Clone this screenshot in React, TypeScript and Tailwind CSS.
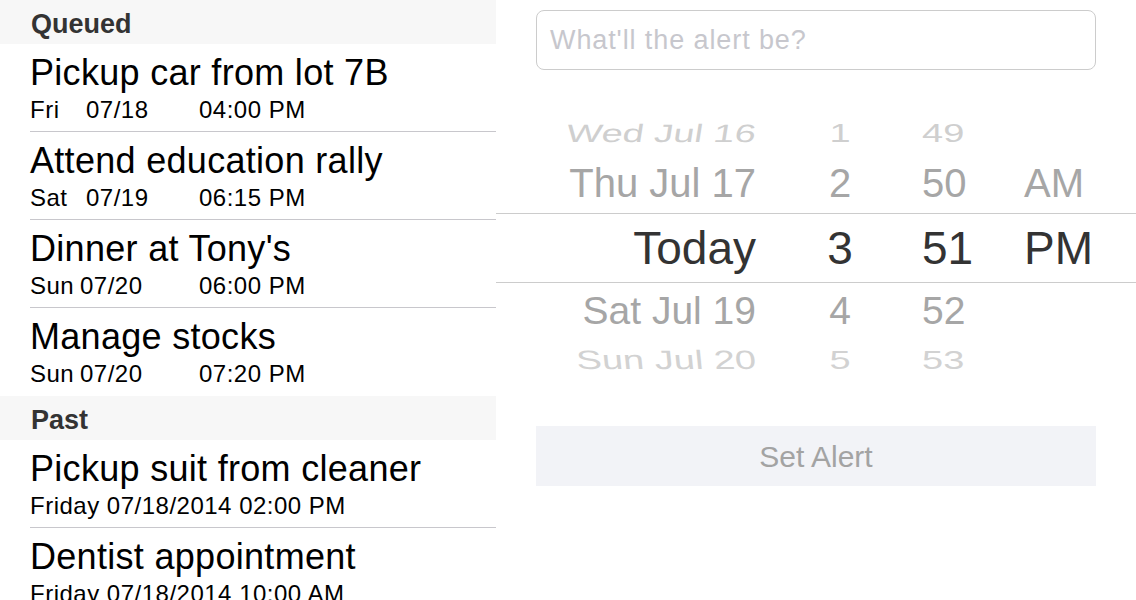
import React from 'react';

type Alert = {
  title: string;
  day?: string;
  date?: string;
  time?: string;
  dayCls?: string;
  dateCls?: string;
  full?: string;
};

const queued: Alert[] = [
  { title: 'Pickup car from lot 7B', day: 'Fri', date: '07/18', time: '04:00 PM', dayCls: 'w-[56px]', dateCls: 'w-[113px]' },
  { title: 'Attend education rally', day: 'Sat', date: '07/19', time: '06:15 PM', dayCls: 'w-[56px]', dateCls: 'w-[113px]' },
  { title: "Dinner at Tony's", day: 'Sun', date: '07/20', time: '06:00 PM', dayCls: 'w-[50px]', dateCls: 'w-[119px]' },
  { title: 'Manage stocks', day: 'Sun', date: '07/20', time: '07:20 PM', dayCls: 'w-[50px]', dateCls: 'w-[119px]' },
];

const past: Alert[] = [
  { title: 'Pickup suit from cleaner', full: 'Friday 07/18/2014 02:00 PM' },
  { title: 'Dentist appointment', full: 'Friday 07/18/2014 10:00 AM' },
];

const SectionHeader = ({ label }: { label: string }) => (
  <div className="h-[44px] shrink-0 bg-[#f7f7f7] pl-[31px] pt-[11px]">
    <span className="block text-[27px] leading-[27px] font-bold text-[#333333]">{label}</span>
  </div>
);

const AlertRow = ({ item, last }: { item: Alert; last: boolean }) => (
  <div className="pl-[30px] shrink-0">
    <div className={`h-[88px] pt-[11px] ${last ? '' : 'border-b border-[#c8c7cc]'}`}>
      <div className="text-[36px] leading-[36px] tracking-[0.3px] text-black whitespace-nowrap">{item.title}</div>
      <div className="mt-[7px] flex text-[24px] leading-[24px] tracking-[0.5px] text-black whitespace-nowrap">
        {item.full ? (
          <span>{item.full}</span>
        ) : (
          <>
            <span className={`inline-block ${item.dayCls}`}>{item.day}</span>
            <span className={`inline-block ${item.dateCls}`}>{item.date}</span>
            <span>{item.time}</span>
          </>
        )}
      </div>
    </div>
  </div>
);

type WheelRow = { date: string; hour: string; minute: string; ampm: string };

const PickerRow = ({ row, cls, dateCls = '' }: { row: WheelRow; cls: string; dateCls?: string }) => (
  <div className={`flex items-center whitespace-nowrap ${cls}`}>
    <div className={`w-[260px] text-right ${dateCls}`}>{row.date}</div>
    <div className="ml-[56px] w-[56px] text-center">{row.hour}</div>
    <div className="ml-[54px] w-[102px]">{row.minute}</div>
    <div>{row.ampm}</div>
  </div>
);

export default function App() {
  return (
    <div className="w-[1136px] h-[600px] overflow-hidden flex bg-white font-['Liberation_Sans',Arial,sans-serif]">
      {/* Alert list */}
      <div className="w-[496px] shrink-0 flex flex-col">
        <SectionHeader label="Queued" />
        {queued.map((item, i) => (
          <AlertRow key={item.title} item={item} last={i === queued.length - 1} />
        ))}
        <SectionHeader label="Past" />
        {past.map((item, i) => (
          <AlertRow key={item.title} item={item} last={i === past.length - 1} />
        ))}
      </div>

      {/* New alert form */}
      <div className="flex-1 flex flex-col">
        <div className="px-[40px] pt-[10px]">
          <div className="h-[60px] rounded-[8px] border border-[#cccccc] flex items-center pl-[13px] text-[27px] tracking-[0.9px] text-[#c7c7cd]">
            What'll the alert be?
          </div>
        </div>

        {/* date picker wheel */}
        <div className="mt-[39px] flex flex-col">
          <div className="h-[48px] flex items-center">
            <PickerRow
              row={{ date: 'Wed Jul 16', hour: '1', minute: '49', ampm: '' }}
              cls="text-[38px] leading-none text-[#cfcfcf] scale-y-[0.66]"
              dateCls="-skew-x-[6deg]"
            />
          </div>
          <div className="h-[56px] flex items-center">
            <PickerRow
              row={{ date: 'Thu Jul 17', hour: '2', minute: '50', ampm: 'AM' }}
              cls="text-[40px] leading-none text-[#a6a6a6] pb-[5px]"
            />
          </div>
          <div className="h-[70px] border-y border-[#cccccc] flex items-center">
            <PickerRow
              row={{ date: 'Today', hour: '3', minute: '51', ampm: 'PM' }}
              cls="text-[46px] leading-none text-[#333333]"
            />
          </div>
          <div className="h-[56px] flex items-center">
            <PickerRow
              row={{ date: 'Sat Jul 19', hour: '4', minute: '52', ampm: '' }}
              cls="text-[39px] leading-none text-[#a6a6a6] pb-[2px]"
            />
          </div>
          <div className="h-[42px] flex items-center">
            <PickerRow
              row={{ date: 'Sun Jul 20', hour: '5', minute: '53', ampm: '' }}
              cls="text-[38px] leading-none text-[#d2d2d2] scale-y-[0.7]"
              dateCls="skew-x-[4deg]"
            />
          </div>
        </div>

        <div className="px-[40px] mt-[45px]">
          <button className="w-full h-[60px] bg-[#f2f3f7] text-[30px] text-[#a3a3a3] flex items-center justify-center">
            Set Alert
          </button>
        </div>
      </div>
    </div>
  );
}
